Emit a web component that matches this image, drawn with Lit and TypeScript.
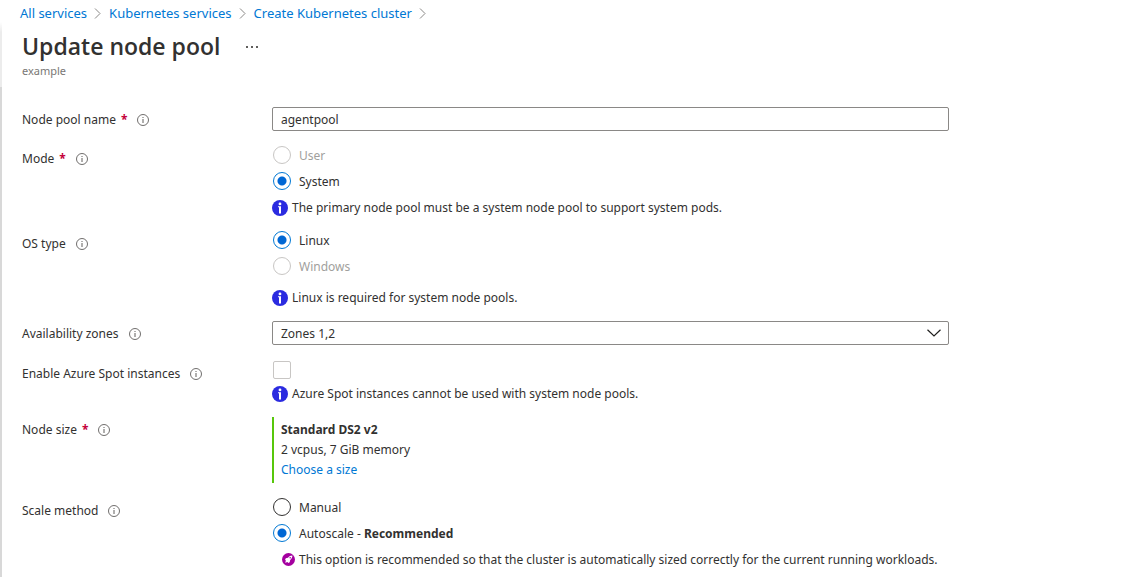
import { LitElement, html, css, nothing } from "lit";
import { customElement, property } from "lit/decorators.js";

const base = css`
  * {
    box-sizing: border-box;
  }
  a {
    color: #0078d4;
    text-decoration: none;
  }
  svg {
    display: block;
    flex: none;
  }
`;

const infoOutline = html`
  <svg width="12" height="12" viewBox="0 0 12 12" aria-hidden="true">
    <circle cx="6" cy="6" r="5.5" fill="none" stroke="#605e5c" stroke-width="0.9" />
    <path d="M6 5v4" stroke="#605e5c" stroke-width="1" />
    <path d="M6 3v1" stroke="#605e5c" stroke-width="1" />
  </svg>
`;

const infoSolid = html`
  <svg width="16" height="16" viewBox="0 0 16 16" aria-hidden="true">
    <circle cx="8" cy="8" r="8" fill="#2b2be0" />
    <circle cx="8" cy="3.9" r="1.4" fill="#fff" />
    <path d="M6 6.200h3v7.300H7V7.200H6z" fill="#fff" />
  </svg>
`;

const rocket = html`
  <svg width="13" height="13" viewBox="0 0 13 13" aria-hidden="true">
    <circle cx="6.5" cy="6.5" r="6.5" fill="#a4009f" />
    <path d="M10.400 2.500c-1.900 0-3.200.8-4.400 2.200L3.800 5.300 3 6.900l1 .5-.9 2.400 2.500-.8.5 1 1.600-.8.5-2.200c1.400-1.200 2.200-2.600 2.200-4.500z" fill="#fff" />
    <circle cx="8.200" cy="4.800" r="0.8" fill="#a4009f" />
  </svg>
`;

const crumbArrow = html`
  <svg width="8" height="12" viewBox="0 0 8 12" aria-hidden="true">
    <path d="M1 1.500l5 5-5 5" fill="none" stroke="#8a8886" stroke-width="1" />
  </svg>
`;

@customElement("field-label")
class FieldLabel extends LitElement {
  @property() text = "";
  @property({ type: Boolean }) required = false;

  static styles = [
    base,
    css`
      :host {
        display: flex;
        align-items: center;
        line-height: 22px;
      }
      .name,
      .star {
        padding-top: 2px;
      }
      .star {
        margin-left: 5px;
        color: #c4003a;
        font-weight: 700;
      }
      .tip {
        margin-left: 10px;
        padding-top: 1px;
      }
    `,
  ];

  render() {
    return html`
      <span class="name">${this.text}</span>
      ${this.required ? html`<span class="star">*</span>` : nothing}
      <span class="tip">${infoOutline}</span>
    `;
  }
}

@customElement("app-root")
class AppRoot extends LitElement {
  static styles = [
    base,
    css`
      :host {
        display: block;
        min-height: 100vh;
        box-sizing: border-box;
        padding: 3px 20px 0 22px;
        color: #323130;
        font: 12px/20px "Noto Sans", "Open Sans", sans-serif;
        background: linear-gradient(#fff 22px, #ececec 32px, #ececec 87px, #d8d8d8 87px) left top / 2px 100% no-repeat #fff;
      }
      .crumbs {
        display: flex;
        align-items: center;
        gap: 7px;
        margin-left: -2px;
        font-size: 13px;
      }
      .title {
        display: flex;
        align-items: center;
        gap: 24px;
        margin: 7px 0 1px;
      }
      h1 {
        margin: 0;
        font-family: "Open Sans", "Noto Sans", sans-serif;
        font-size: 23px;
        line-height: 32px;
        font-weight: 600;
      }
      .more {
        display: flex;
        border: 0;
        padding: 4px 2px 2px;
        background: none;
      }
      .subtitle {
        font-size: 11px;
        line-height: 16px;
        color: #797775;
      }
      form {
        margin-top: 28px;
      }
      .row {
        display: grid;
        grid-template-columns: 250px minmax(0, 677px);
        margin-bottom: 11px;
      }
      .row.wide {
        margin-bottom: 16px;
      }
      .row.tight {
        margin-bottom: 7px;
      }
      .label {
        display: block;
      }
      .choices .label {
        padding-top: 4px;
      }
      .text,
      .select {
        display: block;
        width: 100%;
        height: 24px;
        border: 1px solid #8a8886;
        border-radius: 2px;
        padding: 0 8px;
        color: #323130;
        background: #fff;
        font: inherit;
        line-height: 20px;
        appearance: none;
      }
      .select {
        padding-top: 1px;
      }
      .combo {
        display: grid;
        align-items: center;
      }
      .combo > * {
        grid-area: 1 / 1;
      }
      .combo svg {
        justify-self: end;
        margin-right: 8px;
        pointer-events: none;
      }
      .choice {
        display: flex;
        align-items: center;
        gap: 8px;
        padding-left: 1px;
        line-height: 24px;
      }
      .choice span,
      .note span {
        padding-top: 2px;
      }
      .choice input,
      .check {
        display: block;
        flex: none;
        width: 18px;
        height: 18px;
        margin: 0;
        border: 1px solid #323130;
        border-radius: 50%;
        background: #fff;
        appearance: none;
      }
      .choice input:checked {
        border-color: #0078d4;
        background: radial-gradient(circle, #0067d4 4px, #fff 5px);
      }
      .choice input:disabled {
        border-color: #c8c6c4;
      }
      .choice.off {
        color: #a19f9d;
      }
      .check {
        margin: 0 0 1px 1px;
        border-color: #c8c6c4;
        border-radius: 2px;
      }
      .note {
        display: flex;
        align-items: center;
        gap: 4px;
        line-height: 24px;
      }
      .note svg {
        margin-top: 2px;
      }
      .spaced {
        margin-top: 5px;
      }
      .inset {
        padding-left: 10px;
      }
      .inset svg {
        margin-top: 0;
      }
      .size {
        border-left: 2px solid #57c70c;
        padding: 3px 0 3px 7px;
      }
      .size > * {
        display: block;
      }
      b {
        font-weight: 700;
      }
    `,
  ];

  private radio(group: string, text: unknown, checked = false, disabled = false) {
    return html`
      <label class="choice ${disabled ? "off" : ""}">
        <input type="radio" name=${group} ?checked=${checked} ?disabled=${disabled} />
        <span>${text}</span>
      </label>
    `;
  }

  render() {
    return html`
      <nav class="crumbs" aria-label="Breadcrumb">
        <a href="#">All services</a>${crumbArrow}
        <a href="#">Kubernetes services</a>${crumbArrow}
        <a href="#">Create Kubernetes cluster</a>${crumbArrow}
      </nav>
      <header>
        <div class="title">
          <h1>Update node pool</h1>
          <button class="more" type="button" aria-label="More actions">
            <svg width="12" height="2" viewBox="0 0 12 2">
              <path d="M0 0h2v2H0zM5 0h2v2H5zM10 0h2v2h-2z" fill="#605e5c" />
            </svg>
          </button>
        </div>
        <div class="subtitle">example</div>
      </header>
      <form>
        <div class="row">
          <label class="label" for="name"><field-label text="Node pool name" required></field-label></label>
          <input class="text" id="name" type="text" .value=${"agentpool"} />
        </div>
        <div class="row choices tight" role="radiogroup" aria-labelledby="mode">
          <div class="label" id="mode"><field-label text="Mode" required></field-label></div>
          <div>
            ${this.radio("mode", "User", false, true)} ${this.radio("mode", "System", true)}
            <div class="note">${infoSolid}<span>The primary node pool must be a system node pool to support system pods.</span></div>
          </div>
        </div>
        <div class="row choices" role="radiogroup" aria-labelledby="os">
          <div class="label" id="os"><field-label text="OS type"></field-label></div>
          <div>
            ${this.radio("os", "Linux", true)} ${this.radio("os", "Windows", false, true)}
            <div class="note spaced">${infoSolid}<span>Linux is required for system node pools.</span></div>
          </div>
        </div>
        <div class="row wide">
          <label class="label" for="zones"><field-label text="Availability zones"></field-label></label>
          <div class="combo">
            <select class="select" id="zones">
              <option>Zones 1,2</option>
            </select>
            <svg width="14" height="8" viewBox="0 0 14 8" aria-hidden="true">
              <path d="M0.500 0.700l6.500 6.300 6.500-6.300" fill="none" stroke="#201f1e" stroke-width="1.200" />
            </svg>
          </div>
        </div>
        <div class="row">
          <label class="label" for="spot"><field-label text="Enable Azure Spot instances"></field-label></label>
          <div>
            <input class="check" id="spot" type="checkbox" disabled />
            <div class="note">${infoSolid}<span>Azure Spot instances cannot be used with system node pools.</span></div>
          </div>
        </div>
        <div class="row">
          <div class="label"><field-label text="Node size" required></field-label></div>
          <div class="size">
            <b>Standard DS2 v2</b>
            <span>2 vcpus, 7 GiB memory</span>
            <a href="#">Choose a size</a>
          </div>
        </div>
        <div class="row choices" role="radiogroup" aria-labelledby="scale">
          <div class="label" id="scale"><field-label text="Scale method"></field-label></div>
          <div>
            ${this.radio("scale", "Manual")}
            ${this.radio("scale", html`Autoscale - <b>Recommended</b>`, true)}
            <div class="note inset">${rocket}<span>This option is recommended so that the cluster is automatically sized correctly for the current running workloads.</span></div>
          </div>
        </div>
      </form>
    `;
  }
}
